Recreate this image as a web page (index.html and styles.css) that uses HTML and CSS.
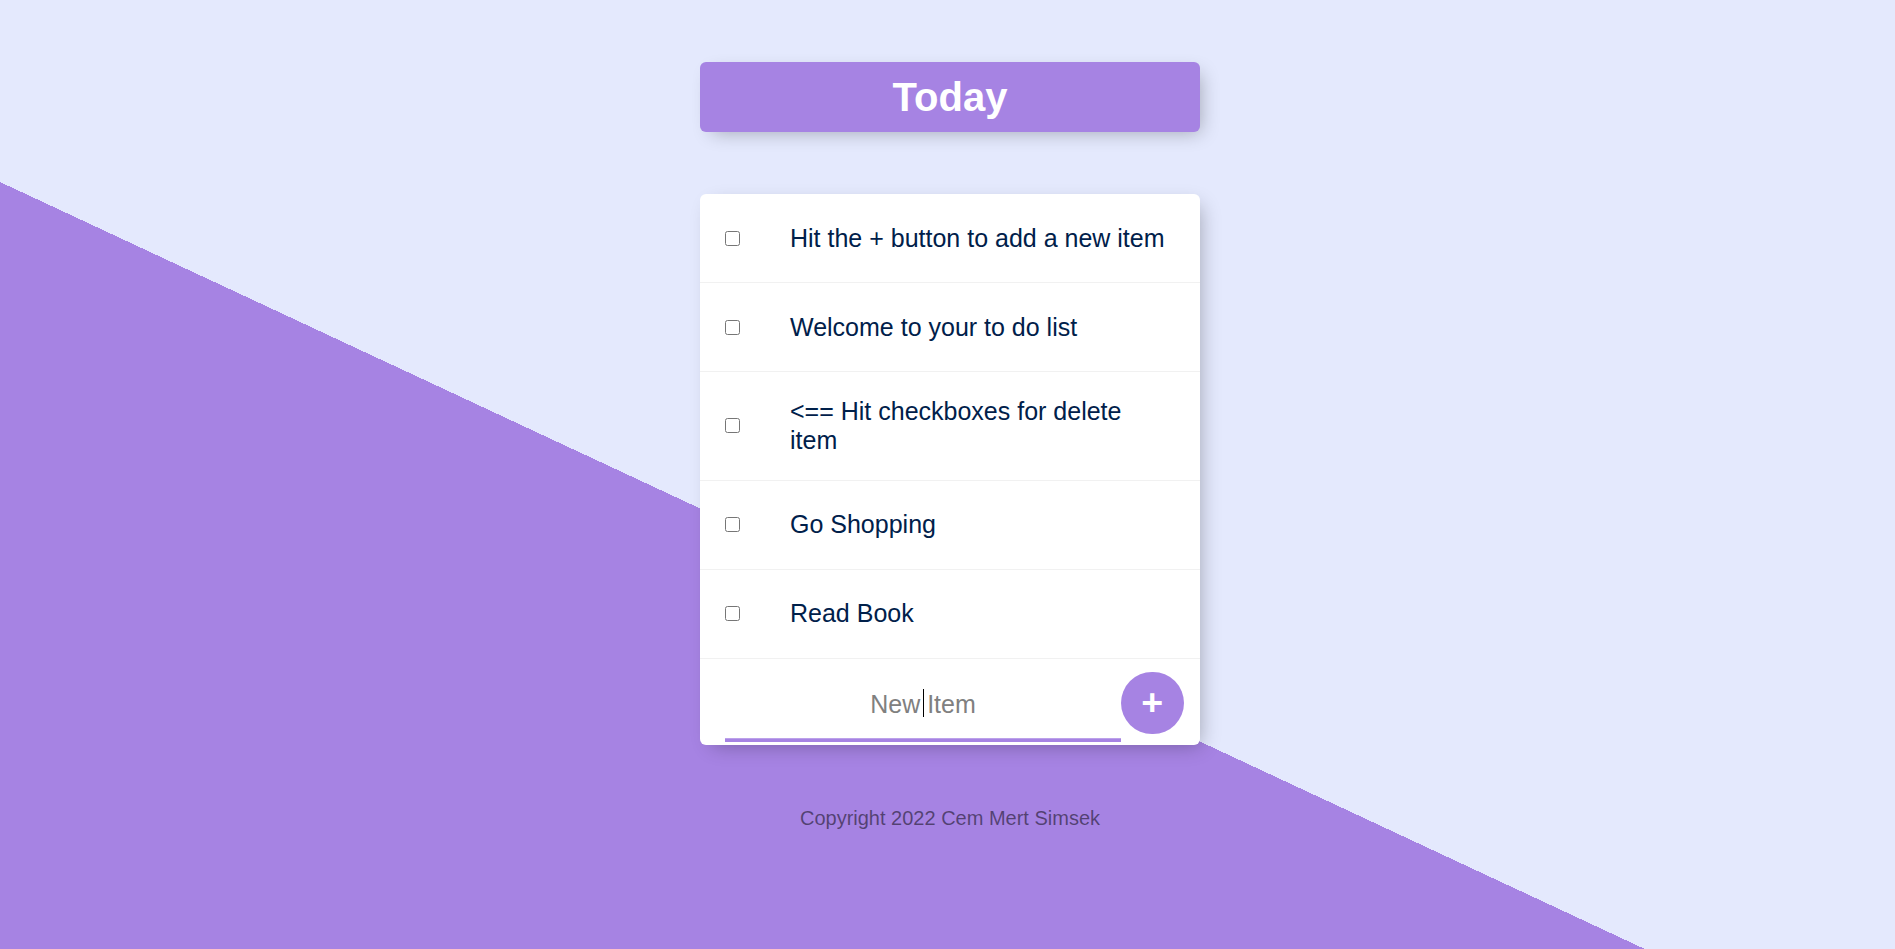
FILE: index.html
```html
<!DOCTYPE html>
<html lang="en">
<head>
<meta charset="utf-8">
<title>To Do List</title>
<link rel="stylesheet" href="styles.css">
</head>
<body>
<main class="page">
  <div class="card heading">
    <h1 class="heading-title">Today</h1>
  </div>

  <div class="card list">
    <div class="item">
      <input class="check" type="checkbox">
      <p class="item-text">Hit the + button to add a new item</p>
    </div>
    <div class="item">
      <input class="check" type="checkbox">
      <p class="item-text">Welcome to your to do list</p>
    </div>
    <div class="item">
      <input class="check" type="checkbox">
      <p class="item-text">&lt;== Hit checkboxes for delete item</p>
    </div>
    <div class="item">
      <input class="check" type="checkbox">
      <p class="item-text">Go Shopping</p>
    </div>
    <div class="item">
      <input class="check" type="checkbox">
      <p class="item-text">Read Book</p>
    </div>
    <form class="add-form" action="#" onsubmit="return false;">
      <span class="field">
        <input class="new-item" type="text" name="newItem" placeholder="New Item" autocomplete="off">
      </span>
      <button class="add-btn" type="submit" name="list">+</button>
    </form>
  </div>

  <footer class="footer">Copyright 2022 Cem Mert Simsek</footer>
</main>
</body>
</html>
```

FILE: styles.css
```css
html {
  background: #E4E9FD linear-gradient(25deg, #A683E3 50%, #E4E9FD 50%) 0 0 / 1900px 1250px no-repeat;
  font-family: "Liberation Sans", Arial, sans-serif;
}

body {
  margin: 0;
}

.page {
  display: flex;
  flex-direction: column;
  align-items: center;
  padding-top: 62px;
  padding-left: 5px;
}

.card {
  width: 500px;
  background: #ffffff;
  border-radius: 6px;
  box-shadow: 6px 6px 19px -6px rgba(0, 0, 0, 0.3);
}

.heading {
  background: #A683E3;
  text-align: center;
}

.heading-title {
  margin: 0;
  padding: 12px;
  color: #ffffff;
  font-size: 40px;
  line-height: 46px;
  font-weight: bold;
}

.list {
  margin-top: 62px;
  display: flex;
  flex-direction: column;
}

.item {
  min-height: 88px;
  display: flex;
  align-items: center;
  border-bottom: 1px solid #F1F1F1;
}

.check {
  width: 15px;
  height: 15px;
  margin: 0 25px 0 25px;
  flex-shrink: 0;
}

.item-text {
  margin: 0;
  padding: 25px;
  font-size: 25px;
  line-height: 28.75px;
  font-weight: 200;
  color: #00204a;
}

.add-form {
  display: flex;
  align-items: flex-start;
  padding: 8px 0 3px 25px;
}

.field {
  position: relative;
  display: block;
}

.field::after {
  content: "";
  position: absolute;
  left: 198px;
  top: 22px;
  width: 1px;
  height: 28px;
  background: #000000;
}

.new-item {
  display: block;
  box-sizing: border-box;
  width: 396px;
  height: 75px;
  padding: 1px 2.5px;
  border: none;
  background: transparent;
  text-align: center;
  font-family: "Liberation Sans", Arial, sans-serif;
  font-size: 25px;
  font-weight: 200;
  color: #00204a;
  outline: none;
  box-shadow: inset 0 -3.75px 0 0 #A683E3;
}

.new-item::placeholder {
  color: grey;
  opacity: 1;
}

.add-btn {
  margin-top: 5px;
  width: 62.5px;
  height: 62.5px;
  border-radius: 50%;
  border: 0;
  padding: 0;
  background: #A683E3;
  color: #ffffff;
  font-family: "Liberation Sans", Arial, sans-serif;
  font-size: 37.5px;
  font-weight: bold;
  line-height: 1;
  display: flex;
  align-items: center;
  justify-content: center;
}

.footer {
  margin-top: 62px;
  color: rgba(0, 0, 0, 0.5);
  text-align: center;
  font-size: 20px;
  line-height: 23px;
}
```
